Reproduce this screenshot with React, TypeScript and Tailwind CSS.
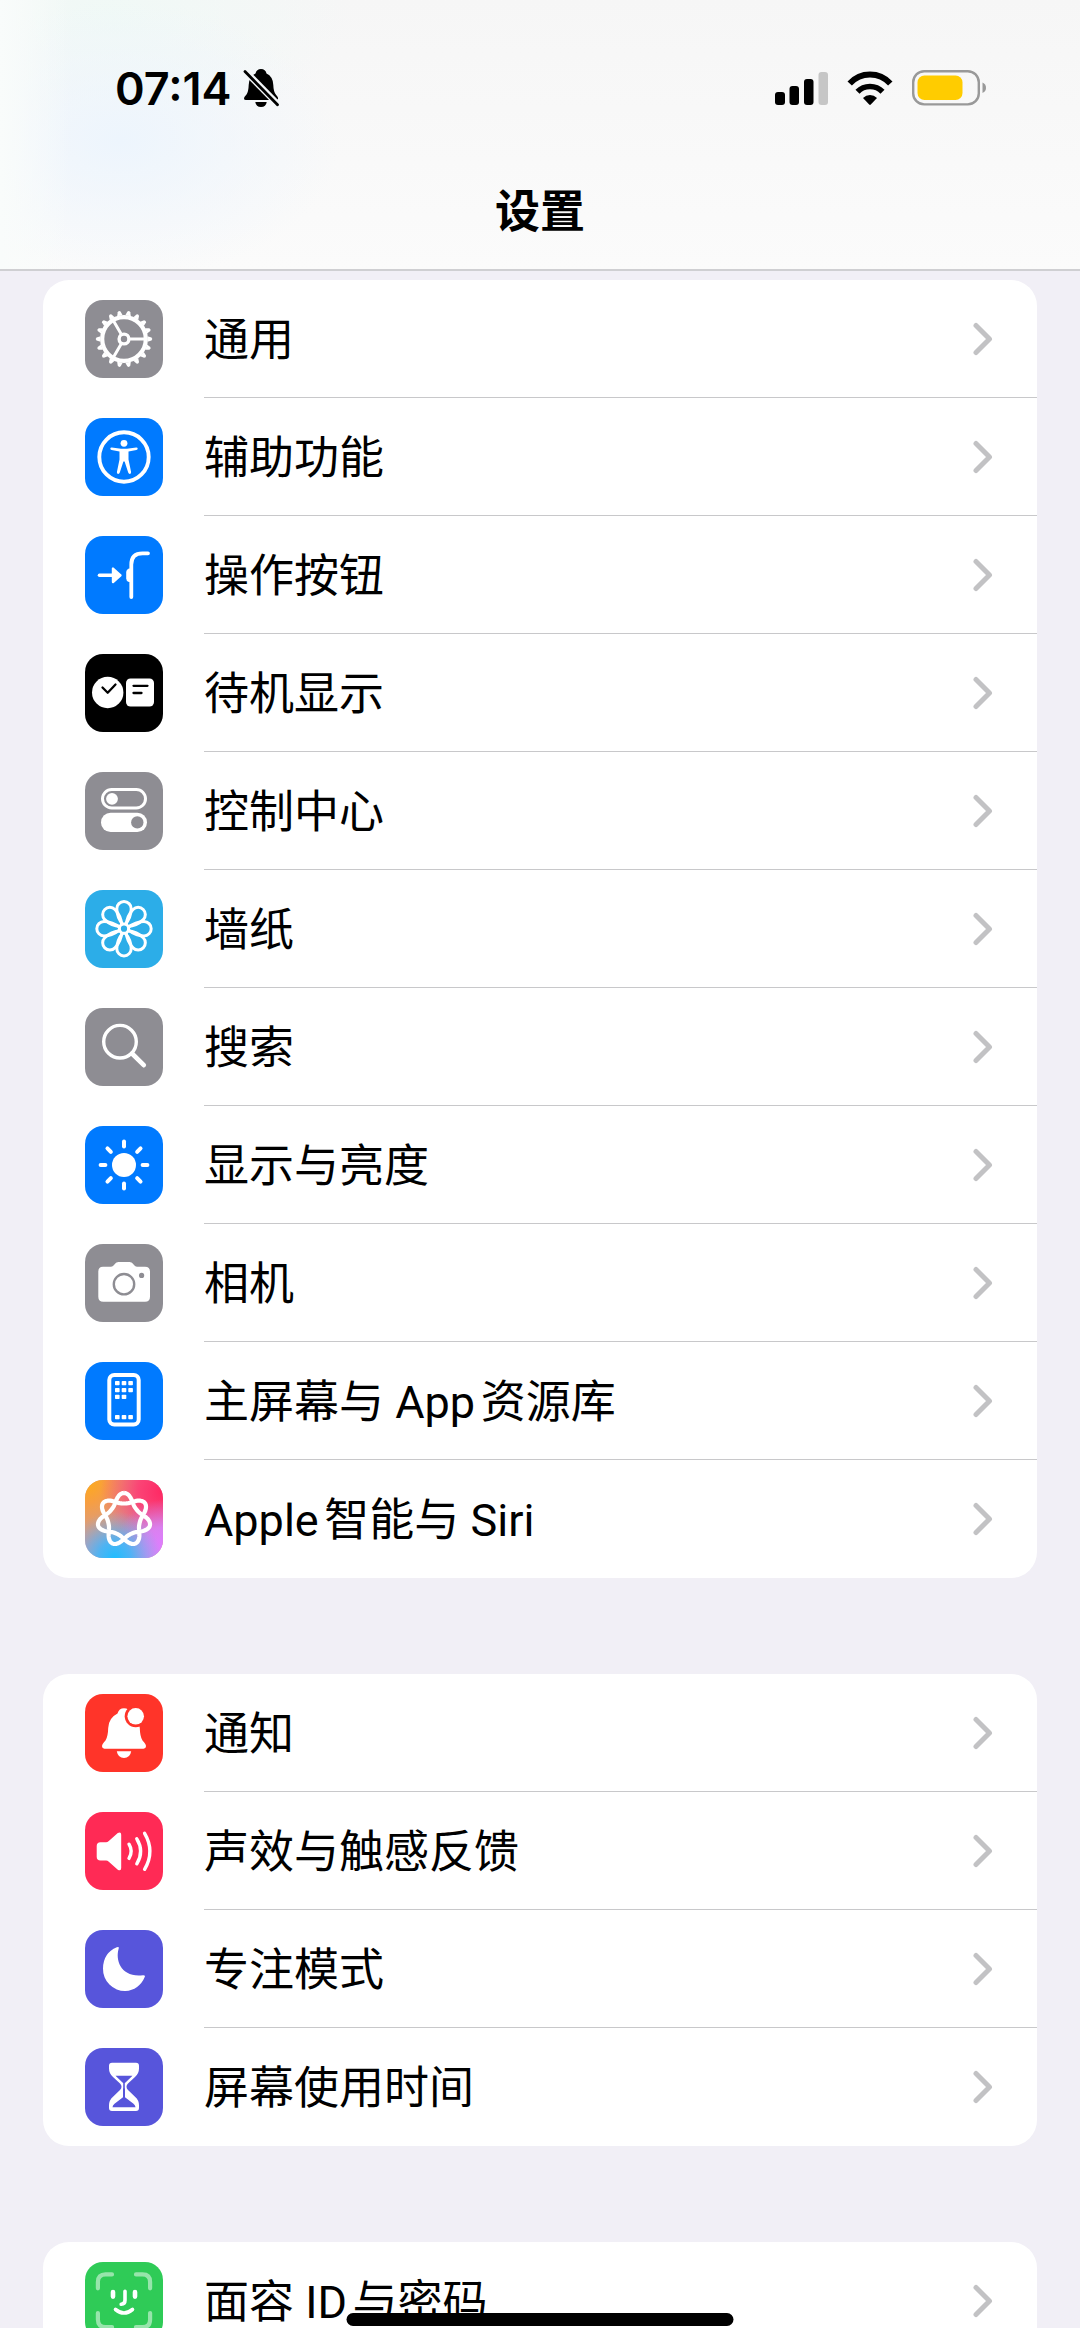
import type { ReactNode } from 'react';

interface SettingItem {
  label: string;
  icon: ReactNode;
}

interface TileProps {
  color: string;
  children: ReactNode;
}

// Rounded app tile, 78 units square
function Tile({ color, children }: TileProps) {
  return (
    <svg viewBox="0 0 78 78" className={`size-[78px] shrink-0 rounded-[18px] ${color}`} fill="none" aria-hidden="true">
      {children}
    </svg>
  );
}

const GEAR_TEETH = Array.from({ length: 18 }, (_, i) => i * 20);
const EIGHTHS = Array.from({ length: 8 }, (_, i) => i * 45);

// Seven-lobed knot: the radius swings three and a half times per turn, over two turns
const KNOT = Array.from({ length: 281 }, (_, i) => {
  const t = (i / 280) * Math.PI * 4;
  const r = 20.4 + 5.3 * Math.cos(3.5 * t) + 0.9 * Math.cos(7 * t);
  return `${(39 + r * Math.sin(t)).toFixed(2)},${(39.5 - r * Math.cos(t)).toFixed(2)}`;
}).join(' ');

function GeneralIcon() {
  return (
    <Tile color="bg-[#8e8d93]">
      <g stroke="#fff">
        <circle cx="39" cy="39" r="21.8" strokeWidth="4.2" />
        <circle cx="39" cy="39" r="4.9" strokeWidth="3.4" />
        <path d="M45 39h16M36 33.8 28 20M36 44.2 28 58" strokeWidth="3" />
      </g>
      {GEAR_TEETH.map(a => (
        <path key={a} d="M62.5 36.2l4 1.3q1.6 1.5 0 3l-4 1.3z" fill="#fff" transform={`rotate(${a} 39 39)`} />
      ))}
    </Tile>
  );
}

function AccessibilityIcon() {
  return (
    <Tile color="bg-[#007aff]">
      <circle cx="39" cy="39" r="24.7" stroke="#fff" strokeWidth="3.9" />
      <circle cx="39" cy="25.3" r="3.4" fill="#fff" />
      <path
        d="M26.8 29.4 36 30.7h6l9.2-1.3q1.4-.1 1.5 1.1 0 1.1-1.3 1.4L43.5 33.6V41.5L46.1 54q.2 1.6-1.1 1.9-1.3.1-1.8-1.3L39.600 43.5h-1.2L34.800 54.600q-.5 1.400-1.8 1.300-1.300-.3-1.100-1.900L34.500 41.500V33.600L26.600 31.900q-1.300-.3-1.300-1.400.1-1.200 1.500-1.100z"
        fill="#fff"
      />
    </Tile>
  );
}

function ActionButtonIcon() {
  return (
    <Tile color="bg-[#007aff]">
      <path d="M63 17.3H57.5Q46.3 17.3 46.3 28.5V61" stroke="#fff" strokeWidth="3.8" strokeLinecap="round" />
      <path d="M45 32.5h-1.2q-2.6 1-2.6 3.5v6.5q0 2.5 2.6 3.5H45z" fill="#fff" />
      <path d="M14.5 39.3H28" stroke="#fff" strokeWidth="3.6" strokeLinecap="round" />
      <path d="M28 32.6v13.4L35.5 39.3z" fill="#fff" stroke="#fff" strokeWidth="2.4" strokeLinejoin="round" />
    </Tile>
  );
}

function StandByIcon() {
  return (
    <Tile color="bg-black">
      <circle cx="22.7" cy="38.5" r="15.7" fill="#fff" />
      <rect x="41" y="24.5" width="28" height="28" rx="4.5" fill="#fff" />
      <path
        d="M17.5 33.5l5.2 5.2 7.8-8.2M48.5 31.8h14M48.5 39h8"
        stroke="#000"
        strokeWidth="2.3"
        strokeLinecap="round"
        strokeLinejoin="round"
      />
    </Tile>
  );
}

function ControlCenterIcon() {
  return (
    <Tile color="bg-[#8e8d93]">
      <rect x="17.5" y="17.6" width="43" height="18.4" rx="9.2" stroke="#fff" strokeWidth="3" />
      <circle cx="27" cy="26.8" r="5.9" fill="#fff" />
      <rect x="16" y="40.8" width="46" height="19.2" rx="9.6" fill="#fff" />
      <circle cx="52.3" cy="50.4" r="6.2" fill="#8e8d93" />
    </Tile>
  );
}

function WallpaperIcon() {
  return (
    <Tile color="bg-[#2cade8]">
      <g stroke="#fff" strokeWidth="3">
        <circle cx="39" cy="38.7" r="4.6" />
        {EIGHTHS.map(a => (
          <path
            key={a}
            d="M-1-4C-6-10-7.2-14.5-7.2-20A7.2 7.2 0 0 1 7.2-20C7.2-14.5 6-10 1-4"
            transform={`translate(39 38.7) rotate(${a})`}
          />
        ))}
      </g>
    </Tile>
  );
}

function SearchIcon() {
  return (
    <Tile color="bg-[#8e8d93]">
      <circle cx="35" cy="33.7" r="16.3" stroke="#fff" strokeWidth="3.4" />
      <path d="M47 45.5 58.8 57.2" stroke="#fff" strokeWidth="4.6" strokeLinecap="round" />
    </Tile>
  );
}

function DisplayIcon() {
  return (
    <Tile color="bg-[#007aff]">
      <circle cx="39" cy="39" r="12" fill="#fff" />
      {EIGHTHS.map(a => (
        <path key={a} d="M39 15.6v4.8" stroke="#fff" strokeWidth="4" strokeLinecap="round" transform={`rotate(${a} 39 39)`} />
      ))}
    </Tile>
  );
}

function CameraIcon() {
  return (
    <Tile color="bg-[#8e8d93]">
      <path
        d="M18 22.7h8q1.8 0 3-1.7l1-1.2q1.2-1.8 3.5-1.8h11q2.3 0 3.5 1.8l1 1.2q1.2 1.7 3 1.7h8q5 0 5 5v25q0 5-5 5H18.3q-5 0-5-5v-25q0-5 4.7-5z"
        fill="#fff"
      />
      <circle cx="39" cy="40.2" r="10.2" stroke="#8e8d93" strokeWidth="2.4" />
      <circle cx="56.6" cy="31.4" r="2.6" fill="#8e8d93" />
    </Tile>
  );
}

function HomeScreenIcon() {
  const dots = [
    [30, 19], [36.7, 19], [43.3, 19],
    [30, 26], [36.7, 26], [43.3, 26],
    [30, 32.7], [36.7, 32.7],
    [30, 53], [36.7, 53], [43.3, 53],
  ];
  return (
    <Tile color="bg-[#007aff]">
      <rect x="24.3" y="13" width="29.4" height="49.6" rx="5" stroke="#fff" strokeWidth="4" />
      {dots.map(([x, y]) => (
        <rect key={`${x}-${y}`} x={x} y={y} width="4.6" height="4.3" rx=".8" fill="#fff" />
      ))}
    </Tile>
  );
}

function IntelligenceIcon() {
  return (
    <Tile color="bg-[#c79aa8]">
      <defs>
        <radialGradient id="ai-orange" cx="0" cy="0" r=".85">
          <stop offset="0" stopColor="#ffae12" />
          <stop offset=".35" stopColor="#ff9f30" stopOpacity=".85" />
          <stop offset="1" stopColor="#ff9f30" stopOpacity="0" />
        </radialGradient>
        <radialGradient id="ai-pink" cx="1" cy=".15" r=".8">
          <stop offset="0" stopColor="#ff2762" />
          <stop offset=".4" stopColor="#ff3a72" stopOpacity=".9" />
          <stop offset="1" stopColor="#ff4a80" stopOpacity="0" />
        </radialGradient>
        <radialGradient id="ai-violet" cx="1" cy=".85" r=".6">
          <stop offset="0" stopColor="#df7cff" />
          <stop offset=".4" stopColor="#d983fa" stopOpacity=".9" />
          <stop offset="1" stopColor="#c884ff" stopOpacity="0" />
        </radialGradient>
        <radialGradient id="ai-blue" cx=".38" cy="1" r=".6">
          <stop offset="0" stopColor="#1fbdff" />
          <stop offset=".35" stopColor="#42b6fa" stopOpacity=".9" />
          <stop offset="1" stopColor="#7ab0e8" stopOpacity="0" />
        </radialGradient>
      </defs>
      <rect width="78" height="78" fill="url(#ai-orange)" />
      <rect width="78" height="78" fill="url(#ai-pink)" />
      <rect width="78" height="78" fill="url(#ai-violet)" />
      <rect width="78" height="78" fill="url(#ai-blue)" />
      <polyline points={KNOT} stroke="#fff" strokeWidth="4.2" strokeLinejoin="round" />
    </Tile>
  );
}

function NotificationsIcon() {
  return (
    <Tile color="bg-[#ff3429]">
      <path
        d="M32.5 19.5Q34 14.3 39 14.3T45.5 19.5Q54.5 24 54.8 34 55 42.5 57.5 46.5 61 50 61 52.3T58.5 54.7H19.5Q17 54.7 17 52.3T20.5 46.5Q23 42.5 23.2 34 23.5 24 32.5 19.5z"
        fill="#fff"
      />
      <path d="M31.8 57.3h14.4Q45 64 39 64T31.8 57.3z" fill="#fff" />
      <circle cx="50.7" cy="22.3" r="11" fill="#ff3429" />
      <circle cx="50.7" cy="22.3" r="8.3" fill="#fff" />
    </Tile>
  );
}

function SoundsIcon() {
  return (
    <Tile color="bg-[#ff2a55]">
      <path
        d="M15.5 30.3h5.5q1.5 0 2.8-1.2L32.8 21q3.4-1.6 3.4 1.7v33.4q0 3.3-3.4 1.7L23.8 49.7q-1.3-1.2-2.8-1.2h-5.5q-3.8 0-3.8-3.8V34.1q0-3.8 3.8-3.8z"
        fill="#fff"
      />
      <path
        d="M44 32.2Q48.4 39.3 44 46.4M51.8 26.8Q59.5 39.3 51.8 51.8M59.6 21.3Q70.2 39.3 59.6 57.3"
        stroke="#fff"
        strokeWidth="3.4"
        strokeLinecap="round"
      />
    </Tile>
  );
}

function FocusIcon() {
  return (
    <Tile color="bg-[#5755db]">
      <path
        d="M31.8 17.3Q34.5 16.2 33.7 18.6C30 31 36.5 47.8 58 45.2Q60.8 45 59.6 47.3A21.8 21.8 0 0 1 40.5 61 22 22 0 0 1 18 38.5Q18.2 23 31.8 17.3z"
        fill="#fff"
      />
    </Tile>
  );
}

function ScreenTimeIcon() {
  return (
    <Tile color="bg-[#5755db]">
      <path
        d="M27 14.7h24q3 0 3 3v2.8q0 5-4 8.5L43 35.5q-1.5 1.5-1.5 3.3t1.5 3.3l7 6.6q4 3.5 4 8.5v2.8q0 3-3 3H27q-3 0-3-3v-2.8q0-5 4-8.5l7-6.6q1.5-1.5 1.5-3.3T35 35.5L28 29q-4-3.5-4-8.5v-2.8q0-3 3-3z"
        fill="#fff"
      />
      <path d="M30.5 27.8h17L40.5 34.5q-1.5 1.3-3 0zM38 49.3v-8.8h2v8.8l8.5 6.5q2 1.7 2 3.5H27.5q0-1.8 2-3.5z" fill="#5755db" />
      <path d="M39 35v15" stroke="#5755db" strokeWidth="1.6" />
    </Tile>
  );
}

function FaceIdIcon() {
  return (
    <Tile color="bg-[#2fcb57]">
      <g stroke="#fff" strokeLinecap="round">
        <path
          d="M12.9 26.3V20q0-7.6 7.6-7.6H27M51 12.4h6.5q7.6 0 7.6 7.6v6.3M65.1 51v6.5q0 7.6-7.6 7.6H51M27 65.1h-6.5q-7.6 0-7.6-7.6V51"
          strokeWidth="4.2"
          opacity=".5"
        />
        <path d="M28 30v4.6M50 30v4.6" strokeWidth="4.6" />
        <path d="M40 29.3v9q0 3.7-3.8 4M30.5 47.5Q39 54.5 47.5 47.5" strokeWidth="3.6" />
      </g>
    </Tile>
  );
}

const GROUPS: SettingItem[][] = [
  [
    { label: '通用', icon: <GeneralIcon /> },
    { label: '辅助功能', icon: <AccessibilityIcon /> },
    { label: '操作按钮', icon: <ActionButtonIcon /> },
    { label: '待机显示', icon: <StandByIcon /> },
    { label: '控制中心', icon: <ControlCenterIcon /> },
    { label: '墙纸', icon: <WallpaperIcon /> },
    { label: '搜索', icon: <SearchIcon /> },
    { label: '显示与亮度', icon: <DisplayIcon /> },
    { label: '相机', icon: <CameraIcon /> },
    { label: '主屏幕与 App资源库', icon: <HomeScreenIcon /> },
    { label: 'Apple智能与 Siri', icon: <IntelligenceIcon /> },
  ],
  [
    { label: '通知', icon: <NotificationsIcon /> },
    { label: '声效与触感反馈', icon: <SoundsIcon /> },
    { label: '专注模式', icon: <FocusIcon /> },
    { label: '屏幕使用时间', icon: <ScreenTimeIcon /> },
  ],
  [{ label: '面容 ID与密码', icon: <FaceIdIcon /> }],
];

function SettingRow({ label, icon }: SettingItem) {
  return (
    <li className="group">
      <a href="#" className="flex h-[118px] items-center gap-[41px] pl-[42px]">
        {icon}
        <span className="flex flex-1 items-center justify-between self-stretch border-b border-[#c8c8ca] pr-[44px] group-last:border-transparent">
          <span className="pt-1 [text-autospace:normal]">{label}</span>
          <svg viewBox="0 0 20 34" className="h-[34px] w-5" fill="none" aria-hidden="true">
            <path d="M3 3.5 16.5 17 3 30.5" stroke="#c2c2c4" strokeWidth="5" strokeLinecap="round" strokeLinejoin="round" />
          </svg>
        </span>
      </a>
    </li>
  );
}

function StatusBar() {
  return (
    <div className="flex h-44 items-center justify-between pr-[93px] pl-[115px]">
      <div className="flex items-center gap-2.5">
        <time className="font-[Inter,sans-serif] leading-none font-semibold">07:14</time>
        <svg viewBox="0 0 38 40" className="h-10 w-[38px]" role="img" aria-label="静音">
          <path
            d="M13.5 5.5Q14.5 1 19 1t5.5 4.5Q31 8.5 31.3 17 31.5 24 34 26.8 36.5 29.5 36 31 35.5 32 34 32H4Q2 32 2 30.5T4.5 26.5Q6.5 23.5 6.7 17 7 8.5 13.5 5.5z"
            fill="#000"
          />
          <path d="M13.3 34h11.4Q24 39 19 39T13.3 34z" fill="#000" />
          <path d="M3.5 3.5 36 36.5" stroke="#f3f6f8" strokeWidth="6.5" />
          <path d="M3 3.5 35.5 36.8" stroke="#000" strokeWidth="2.8" strokeLinecap="round" />
        </svg>
      </div>

      <div className="flex items-center gap-[19px]">
        <svg viewBox="0 0 53 36" className="h-9 w-[53px]" role="img" aria-label="信号">
          <rect y="22" width="10" height="13" rx="3" />
          <rect x="14.5" y="16" width="9.5" height="19" rx="3" />
          <rect x="29" y="9" width="9.5" height="26" rx="3" />
          <rect x="43.5" y="2" width="9.5" height="33" rx="3" fill="#c6c6c6" />
        </svg>
        <svg viewBox="0 0 46 36" className="h-9 w-[46px]" fill="none" role="img" aria-label="无线网络">
          <path d="M2.7 13.5Q11 4.5 23 4.5T43.3 13.5" stroke="#000" strokeWidth="6" />
          <path d="M10.5 21.7Q15.5 16.5 23 16.5T35.5 21.7" stroke="#000" strokeWidth="5.6" />
          <path d="M16 28Q19 25 23 25T30 28L23.800 34.500q-.8.800-1.600 0z" fill="#000" />
        </svg>
        <svg viewBox="0 0 75 36" className="h-9 w-[75px]" fill="none" role="img" aria-label="电池">
          <rect x="1.2" y="1.2" width="65.6" height="33.2" rx="11" stroke="#999" strokeWidth="2.4" />
          <rect x="5.5" y="5.5" width="45" height="24.6" rx="7" fill="#ffcc00" />
          <path d="M70.5 12.5Q74 14 74 17.8T70.5 23z" fill="#999" />
        </svg>
      </div>
    </div>
  );
}

export default function App() {
  return (
    <div className="relative flex h-screen flex-col overflow-hidden bg-[#f1eff6] font-[Roboto,'Noto_Sans_CJK_SC',sans-serif] text-[45px] leading-none text-black">
      <header className="shrink-0 border-b-2 border-[#cfcfd2] bg-[#f8f8f8] bg-[linear-gradient(to_right,#f9fcfb,transparent_70px),radial-gradient(ellipse_220px_140px_at_120px_140px,#edf5fd,transparent),radial-gradient(ellipse_240px_120px_at_110px_15px,#f0f9f6,transparent),linear-gradient(#f6f6f6,#fbfbfb)]">
        <StatusBar />
        <h1 className="flex h-[93px] items-start justify-center pt-3.5 font-semibold">设置</h1>
      </header>

      <main className="flex shrink-0 flex-col gap-24 px-[43px] pt-[9px]">
        {GROUPS.map((items, i) => (
          <ul key={i} className="overflow-hidden rounded-[26px] bg-white">
            {items.map(item => (
              <SettingRow key={item.label} label={item.label} icon={item.icon} />
            ))}
          </ul>
        ))}
      </main>

      {/* Home indicator */}
      <div className="absolute bottom-0.5 left-1/2 h-[13px] w-[387px] -translate-x-1/2 rounded-full bg-black" />
    </div>
  );
}
